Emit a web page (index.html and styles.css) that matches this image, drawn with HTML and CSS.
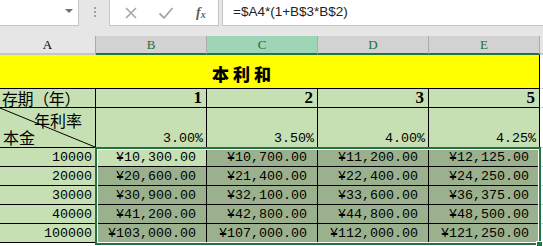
FILE: index.html
```html
<!DOCTYPE html>
<html>
<head>
<meta charset="utf-8">
<link rel="stylesheet" href="styles.css">
</head>
<body>
<div class="app">
  <div class="fbar">
    <div class="namebox"><span class="arrow"></span></div>
    <div class="grip"><i></i><i></i><i></i></div>
    <div class="tools">
      <svg class="ico" width="14" height="14" viewBox="0 0 14 14"><path d="M2 2 L12 12 M12 2 L2 12" stroke="#a6a6a6" stroke-width="1.6" fill="none"/></svg>
      <svg class="ico" width="16" height="14" viewBox="0 0 16 14"><path d="M1.5 7.5 L6 12 L14.5 2" stroke="#a6a6a6" stroke-width="1.8" fill="none"/></svg>
      <span class="fx">f<sub>x</sub></span>
    </div>
    <div class="formula"><span class="ftext">=$A4*(1+B$3*B$2)</span></div>
  </div>
  <div class="sheet">
    <div class="ch cha">A</div>
    <div class="ch">B</div>
    <div class="ch chsel">C</div>
    <div class="ch">D</div>
    <div class="ch">E</div>
    <div class="ch chrest"></div>

    <div class="title">本利和</div>
    <div class="rest"></div>

    <div class="c lab">存期（年）</div>
    <div class="c num">1</div>
    <div class="c num">2</div>
    <div class="c num">3</div>
    <div class="c num">5</div>
    <div class="rest"></div>

    <div class="c diag">
      <svg class="diagline" width="95" height="39" viewBox="0 0 95 39" preserveAspectRatio="none"><line x1="0" y1="0" x2="95" y2="39" stroke="#000" stroke-width="1"/></svg>
      <span class="rate">年利率</span>
      <span class="prin">本金</span>
    </div>
    <div class="c mono">3.00%</div>
    <div class="c mono">3.50%</div>
    <div class="c mono">4.00%</div>
    <div class="c mono">4.25%</div>
    <div class="rest"></div>

    <div class="c mono">10000</div>
    <div class="c mono cur">¥10,300.00</div>
    <div class="c mono cur sel">¥10,700.00</div>
    <div class="c mono cur sel">¥11,200.00</div>
    <div class="c mono cur sel">¥12,125.00</div>
    <div class="rest"></div>

    <div class="c mono">20000</div>
    <div class="c mono cur sel">¥20,600.00</div>
    <div class="c mono cur sel">¥21,400.00</div>
    <div class="c mono cur sel">¥22,400.00</div>
    <div class="c mono cur sel">¥24,250.00</div>
    <div class="rest"></div>

    <div class="c mono">30000</div>
    <div class="c mono cur sel">¥30,900.00</div>
    <div class="c mono cur sel">¥32,100.00</div>
    <div class="c mono cur sel">¥33,600.00</div>
    <div class="c mono cur sel">¥36,375.00</div>
    <div class="rest"></div>

    <div class="c mono">40000</div>
    <div class="c mono cur sel">¥41,200.00</div>
    <div class="c mono cur sel">¥42,800.00</div>
    <div class="c mono cur sel">¥44,800.00</div>
    <div class="c mono cur sel">¥48,500.00</div>
    <div class="rest"></div>

    <div class="c mono">100000</div>
    <div class="c mono cur sel">¥103,000.00</div>
    <div class="c mono cur sel">¥107,000.00</div>
    <div class="c mono cur sel">¥112,000.00</div>
    <div class="c mono cur sel">¥121,250.00</div>
    <div class="rest"></div>

    <div class="selbox"></div>
    <div class="handle"></div>
  </div>
</div>
</body>
</html>
```
FILE: styles.css
```css
* { box-sizing: border-box; }
html, body { margin: 0; padding: 0; }
body { width: 543px; height: 246px; overflow: hidden; background: #fff; }
.app { width: 543px; height: 246px; overflow: hidden; }

.fbar {
  width: 543px;
  height: 36px;
  background: #e6e6e6;
  display: grid;
  grid-template-columns: 79px 30px 110px 3px 321px;
  align-items: start;
}
.namebox {
  grid-column: 1;
  height: 26px;
  background: #fff;
  border-right: 1px solid #c6c6c6;
  border-bottom: 1px solid #c6c6c6;
  position: relative;
}
.arrow {
  position: absolute;
  left: 65px;
  top: 9px;
  width: 0; height: 0;
  border-left: 4px solid transparent;
  border-right: 4px solid transparent;
  border-top: 4px solid #6f6f6f;
}
.grip {
  grid-column: 2;
  height: 26px;
  display: flex;
  flex-direction: column;
  align-items: center;
  padding-top: 7px;
  gap: 2px;
}
.grip i { display: block; width: 2px; height: 2px; background: #a0a0a0; margin-left: 1px; }
.tools {
  grid-column: 3;
  height: 26px;
  background: #fff;
  border-left: 1px solid #c6c6c6;
  border-right: 1px solid #c6c6c6;
  border-bottom: 1px solid #c6c6c6;
  display: flex;
  align-items: center;
  padding-left: 14px;
  gap: 20px;
}
.fx {
  font-family: "Liberation Serif", serif;
  font-style: italic;
  font-weight: bold;
  font-size: 14px;
  color: #5f5f5f;
  margin-left: 2px;
}
.fx sub { font-size: 10px; vertical-align: -1px; }
.formula {
  grid-column: 5;
  height: 26px;
  background: #fff;
  border-left: 1px solid #c6c6c6;
  border-bottom: 1px solid #c6c6c6;
  display: flex;
  align-items: center;
  padding-left: 10px;
  padding-bottom: 2px;
}
.ftext {
  font-family: "Liberation Sans", Arial, sans-serif;
  font-size: 13.5px;
  color: #222;
}

.sheet {
  position: relative;
  display: grid;
  grid-template-columns: 96px 111px 111px 111px 111px 1fr;
  grid-template-rows: 19px 34px 19px 40px 19px 19px 19px 19px 19px;
}
.ch {
  background: #d2d2d2;
  border-right: 1px solid #ababab;
  border-bottom: 2px solid #217346;
  color: #1f6b41;
  font-family: "Liberation Serif", serif;
  font-size: 13px;
  text-align: center;
  line-height: 18px;
}
.cha { background: #e6e6e6; color: #000; border-bottom: 2px solid #c6c6c6; }
.chsel { background: #9fd5b7; }
.chrest { background: #e6e6e6; border-bottom: 2px solid #c6c6c6; border-right: none; }

.title {
  grid-column: 1 / 6;
  background: #ffff00;
  border-right: 1px solid #000;
  border-bottom: 1px solid #000;
  font-family: "Noto Sans CJK SC", sans-serif;
  font-weight: 900;
  font-size: 17px;
  letter-spacing: 4px;
  padding-left: 212px;
  padding-top: 8px;
  line-height: 22px;
  color: #000;
}
.rest { border-bottom: 1px solid #d4d4d4; background: #fff; }

.c {
  background: #c6e0b4;
  border-right: 1px solid #000;
  border-bottom: 1px solid #000;
  display: flex;
  align-items: flex-end;
  justify-content: flex-end;
  padding: 0 3px 0 2px;
  color: #000;
  white-space: nowrap;
}
.sel { background: #9bb08d; }
.lab {
  justify-content: flex-start;
  font-family: "Noto Sans CJK SC", sans-serif;
  font-size: 16px;
  line-height: 18px;
  padding-left: 2px;
  letter-spacing: -0.4px;
}
.num {
  font-family: "Liberation Serif", serif;
  font-weight: bold;
  font-size: 17px;
  line-height: 18px;
  padding-right: 4px;
}
.mono {
  font-family: "Liberation Mono", monospace;
  font-size: 13.33px;
  line-height: 17px;
  padding-right: 3px;
}
.cur { padding-right: 10px; }
.diag {
  position: relative;
  display: block;
  font-family: "Noto Sans CJK SC", sans-serif;
  font-size: 16px;
  line-height: 18px;
}
.diagline { position: absolute; left: 0; top: 0; }
.rate { position: absolute; right: 13px; top: 3px; }
.prin { position: absolute; left: 3px; bottom: 1px; }

.selbox {
  position: absolute;
  left: 95px;
  top: 111px;
  width: 446px;
  height: 98px;
  border: 2px solid #217346;
  box-shadow: inset 0 0 0 1px #fff;
  pointer-events: none;
}
.handle {
  position: absolute;
  left: 536px;
  top: 205px;
  width: 7px;
  height: 7px;
  background: #217346;
  border: 1px solid #fff;
}
```
